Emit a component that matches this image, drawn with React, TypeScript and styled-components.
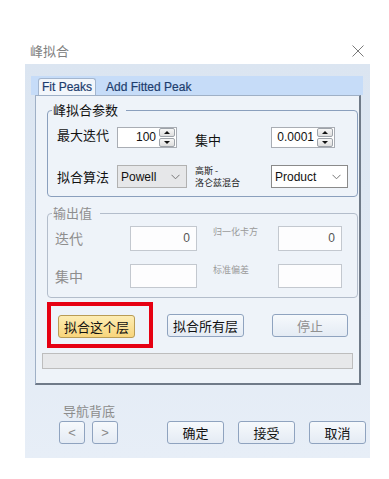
import React from "react";
import styled, { createGlobalStyle } from "styled-components";

const GlobalStyle = createGlobalStyle`
  body {
    margin: 0;
    background: #fff;
    font-family: "Noto Sans CJK SC", "Noto Sans", sans-serif;
  }
`;

const Window = styled.div`
  width: 389px;
  height: 479px;
`;

const TitleBar = styled.div`
  height: 64px;
  box-sizing: border-box;
  padding: 38px 25px 0 30px;
  display: flex;
  justify-content: space-between;
  align-items: center;
`;

const Title = styled.div`
  font-size: 13px;
  line-height: 18px;
  color: #808080;
`;

const Panel = styled.div`
  margin-left: 25px;
  width: 345px;
  height: 394px;
  box-sizing: border-box;
  padding: 12px 7px 0 6px;
  background: linear-gradient(#dbe5f1, #e7eef7);
`;

const TabStrip = styled.div`
  height: 19px;
  background: #c6dcf8;
  display: flex;
  align-items: flex-end;
  padding-left: 7px;
`;

const Tab = styled.div<{ $active?: boolean }>`
  height: 17px;
  box-sizing: border-box;
  padding: 0 3px;
  margin-right: 6px;
  font-family: "Liberation Sans", Arial, sans-serif;
  font-size: 12px;
  line-height: 16px;
  color: #1d3d6e;
  -webkit-text-stroke: 0.2px #1d3d6e;
  background: ${(p) => (p.$active ? "#f2f6fb" : "transparent")};
  border: 1px solid ${(p) => (p.$active ? "#a3b6cf" : "transparent")};
  border-bottom: none;
  border-radius: 3px 3px 0 0;
`;

const ContentPane = styled.div`
  margin: 0 2px 0 4px;
  height: 290px;
  box-sizing: border-box;
  padding: 6px 2px 0 6px;
  background: #eef3f9;
  border: 1px solid #9fb0c6;
  border-right: 2px solid #6f7a88;
  border-bottom: 2px solid #6f7a88;
`;

const Group = styled.fieldset<{ $disabled?: boolean; $top?: number }>`
  margin: ${(p) => p.$top ?? 0}px 0 0 5px;
  padding: 0;
  width: 311px;
  box-sizing: border-box;
  border: 1px solid ${(p) => (p.$disabled ? "#b3bdcb" : "#8a9fbd")};
  border-radius: 4px;
`;

const Legend = styled.legend<{ $disabled?: boolean }>`
  margin-left: 4px;
  padding: 0 8px 0 1px;
  font-size: 13px;
  line-height: 16px;
  color: ${(p) => (p.$disabled ? "#8e8e8e" : "#111")};
`;

const ParamGrid = styled.div`
  display: grid;
  grid-template-columns: 60px 78px 76px auto;
  grid-template-rows: 21px 23px;
  row-gap: 17px;
  align-items: center;
  padding: 9px 0 8px 9px;
`;

const OutputGrid = styled.div`
  display: grid;
  grid-template-columns: 75px 83px 65px auto;
  grid-template-rows: 25px 24px;
  row-gap: 13px;
  align-items: center;
  padding: 5px 0 9px 7px;
`;

const Label = styled.div<{ $disabled?: boolean; $size?: number; $align?: string }>`
  font-size: ${(p) => p.$size ?? 13}px;
  line-height: ${(p) => Math.round((p.$size ?? 13) * 1.2)}px;
  color: ${(p) => (p.$disabled ? "#8e8e8e" : "#111")};
  align-self: ${(p) => p.$align ?? "center"};
  white-space: nowrap;
`;

const SmallLabel = styled.div<{ $disabled?: boolean; $align?: string }>`
  font-size: 9px;
  line-height: 12px;
  color: ${(p) => (p.$disabled ? "#9a9a9a" : "#222")};
  align-self: ${(p) => p.$align ?? "start"};
  white-space: nowrap;
`;

const SpinBox = styled.div<{ $w: number }>`
  width: ${(p) => p.$w}px;
  height: 21px;
  box-sizing: border-box;
  border: 1px solid #a9adb4;
  background: #fff;
  display: flex;
`;

const SpinValue = styled.div`
  flex: 1;
  text-align: right;
  padding: 0 3px;
  font-family: "Liberation Sans", Arial, sans-serif;
  font-size: 12px;
  line-height: 19px;
  color: #111;
`;

const SpinButtons = styled.div`
  width: 16px;
  display: flex;
  flex-direction: column;
  gap: 1px;
  padding: 0 1px 0 0;
`;

const SpinButton = styled.div<{ $down?: boolean }>`
  flex: 1;
  border: 1px solid #9ea3aa;
  border-radius: 2px;
  background: linear-gradient(#f7f7f7, #dedede);
  display: flex;
  align-items: center;
  justify-content: center;

  &::after {
    content: "";
    border-left: 3px solid transparent;
    border-right: 3px solid transparent;
    ${(p) =>
      p.$down ? "border-top: 3px solid #111;" : "border-bottom: 3px solid #111;"}
  }
`;

const Combo = styled.div<{ $w: number; $disabled?: boolean }>`
  width: ${(p) => p.$w}px;
  height: 23px;
  box-sizing: border-box;
  border: 1px solid ${(p) => (p.$disabled ? "#b1b1b1" : "#8a8a8a")};
  background: ${(p) => (p.$disabled ? "#e6e7e9" : "#fff")};
  display: flex;
  align-items: center;
  justify-content: space-between;
  padding: 0 6px 0 3px;
  font-family: "Liberation Sans", Arial, sans-serif;
  font-size: 12px;
  color: #111;
`;

const TextBox = styled.div<{ $w: number; $h: number }>`
  width: ${(p) => p.$w}px;
  height: ${(p) => p.$h}px;
  box-sizing: border-box;
  border: 1px solid #c3c8cf;
  background: #fdfdfe;
  text-align: right;
  padding-right: 6px;
  font-family: "Liberation Sans", Arial, sans-serif;
  font-size: 12px;
  line-height: ${(p) => p.$h - 2}px;
  color: #555;
`;

const ButtonRow = styled.div`
  margin: 4px 0 0 5px;
  display: flex;
  align-items: center;
`;

const Highlight = styled.div`
  border: 4px solid #e60012;
  padding: 7px 14px 6px 7px;
  margin-right: 14px;
`;

const Button = styled.button<{ $w: number; $primary?: boolean; $disabled?: boolean; $gap?: number }>`
  width: ${(p) => p.$w}px;
  height: 23px;
  margin: 0 0 0 ${(p) => p.$gap ?? 0}px;
  padding: 0;
  box-sizing: border-box;
  border: 1px solid ${(p) => (p.$primary ? "#b99c55" : "#8fa3bf")};
  border-radius: 3px;
  background: ${(p) =>
    p.$primary
      ? "linear-gradient(#fdedb4, #f8d57c)"
      : "linear-gradient(#f6f9fc, #e4ebf4)"};
  font-family: "Noto Sans CJK SC", sans-serif;
  font-size: 13px;
  line-height: 19px;
  color: ${(p) => (p.$disabled ? "#909090" : "#111")};
`;

const ProgressBar = styled.div`
  margin-top: 5px;
  width: 311px;
  height: 16px;
  box-sizing: border-box;
  border: 1px solid #bdbdbd;
  background: #e7e8ea;
`;

const Footer = styled.div`
  margin-top: 18px;
  display: flex;
  align-items: flex-end;
`;

const NavGroup = styled.div`
  margin-left: 28px;
  display: flex;
  flex-direction: column;
`;

const NavLabel = styled.div`
  margin-left: 4px;
  font-size: 13px;
  line-height: 16px;
  color: #8c8c8c;
`;

const NavButtons = styled.div`
  margin-top: 2px;
  display: flex;
  gap: 7px;
`;

const NavButton = styled(Button)`
  font-family: "Liberation Sans", Arial, sans-serif;
  color: #888;
  font-size: 13px;
`;

const DialogButtons = styled.div`
  margin-left: 49px;
  display: flex;
  gap: 14px;
`;

const Chevron = () => (
  <svg width="9" height="6" viewBox="0 0 9 6">
    <path d="M0.5 0.8 L4.5 4.8 L8.5 0.8" fill="none" stroke="#777" strokeWidth="1" />
  </svg>
);

const CloseIcon = () => (
  <svg width="12" height="12" viewBox="0 0 12 12">
    <path d="M0.5 0.5 L11.5 11.5 M11.5 0.5 L0.5 11.5" stroke="#7a7a7a" strokeWidth="1" />
  </svg>
);

function Spin({ value, w }: { value: string; w: number }) {
  return (
    <SpinBox $w={w}>
      <SpinValue>{value}</SpinValue>
      <SpinButtons>
        <SpinButton />
        <SpinButton $down />
      </SpinButtons>
    </SpinBox>
  );
}

export default function App() {
  return (
    <Window>
      <GlobalStyle />
      <TitleBar>
        <Title>峰拟合</Title>
        <CloseIcon />
      </TitleBar>
      <Panel>
        <TabStrip>
          <Tab $active>Fit Peaks</Tab>
          <Tab>Add Fitted Peak</Tab>
        </TabStrip>
        <ContentPane>
          <Group>
            <Legend>峰拟合参数</Legend>
            <ParamGrid>
              <Label $align="start">最大迭代</Label>
              <Spin value="100" w={60} />
              <Label $align="end">集中</Label>
              <Spin value="0.0001" w={64} />
              <Label>拟合算法</Label>
              <Combo $w={70} $disabled>
                Powell <Chevron />
              </Combo>
              <SmallLabel $align="center">
                高斯 -
                <br />
                洛仑兹混合
              </SmallLabel>
              <Combo $w={77}>
                Product <Chevron />
              </Combo>
            </ParamGrid>
          </Group>
          <Group $disabled $top={8}>
            <Legend $disabled>输出值</Legend>
            <OutputGrid>
              <Label $disabled $size={14}>迭代</Label>
              <TextBox $w={67} $h={25}>0</TextBox>
              <SmallLabel $disabled>归一化卡方</SmallLabel>
              <TextBox $w={64} $h={25}>0</TextBox>
              <Label $disabled $size={14}>集中</Label>
              <TextBox $w={67} $h={24} />
              <SmallLabel $disabled>标准偏差</SmallLabel>
              <TextBox $w={64} $h={24} />
            </OutputGrid>
          </Group>
          <ButtonRow>
            <Highlight>
              <Button $w={77} $primary>拟合这个层</Button>
            </Highlight>
            <Button $w={77}>拟合所有层</Button>
            <Button $w={76} $disabled $gap={28}>停止</Button>
          </ButtonRow>
          <ProgressBar />
        </ContentPane>
        <Footer>
          <NavGroup>
            <NavLabel>导航背底</NavLabel>
            <NavButtons>
              <NavButton $w={26}>&lt;</NavButton>
              <NavButton $w={26}>&gt;</NavButton>
            </NavButtons>
          </NavGroup>
          <DialogButtons>
            <Button $w={57}>确定</Button>
            <Button $w={57}>接受</Button>
            <Button $w={57}>取消</Button>
          </DialogButtons>
        </Footer>
      </Panel>
    </Window>
  );
}
